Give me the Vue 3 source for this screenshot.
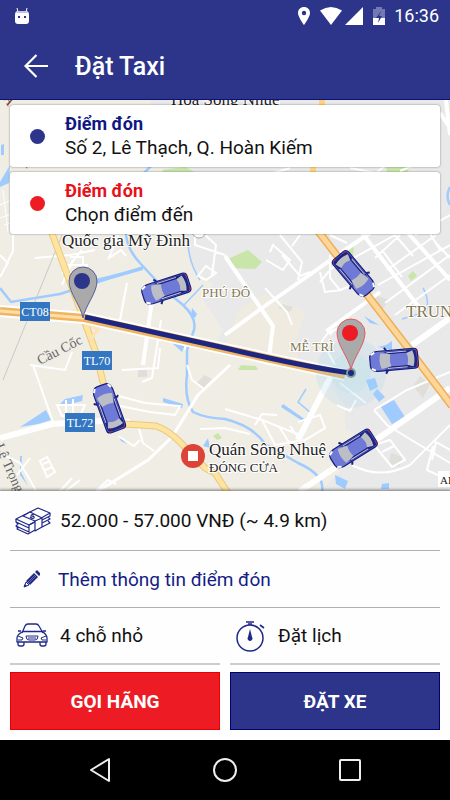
<template>
  <div class="screen">
    <header class="header">
      <div class="status-bar">
        <svg class="bot" viewBox="0 0 16 18">
          <path d="M3 1L4 5M13 1L12 5" stroke="#fff" stroke-width="1" />
          <path d="M1 8Q1 4 4 4H12Q15 4 15 8V14Q15 17 12 17H4Q1 17 1 14Z" fill="#fff" />
          <path d="M2 6Q3 4 5 4H11Q13 4 14 6Z" fill="#c3c5de" />
          <path d="M4 9h2v2H4zM10 9h2v2h-2z" fill="#2c3589" />
        </svg>
        <div class="status-icons">
          <svg width="14" height="20" viewBox="0 0 14 20">
            <path fill="#fff" fill-rule="evenodd" d="M7 1C3.500 1 1 3.500 1 7C1 11 7 19 7 19C7 19 13 11 13 7C13 3.500 10.500 1 7 1ZM7 4.800A2.200 2.200 0 1 1 7 9.200A2.200 2.200 0 1 1 7 4.800Z" />
          </svg>
          <svg class="wifi" width="24" height="20" viewBox="0 0 24 20">
            <path d="M1 4.500Q12 -2.500 23 4.500L12 19Z" fill="#fff" />
          </svg>
          <svg width="18" height="20" viewBox="0 0 18 20">
            <path d="M18 1V19H0Z" fill="#fff" />
          </svg>
          <svg class="battery" width="14" height="20" viewBox="0 0 14 20">
            <path d="M1 3H4V1H10V3H13V12H1Z" fill="#7379b3" />
            <path d="M1 12H13V19H1Z" fill="#fff" />
            <path d="M9 5L4 12H7L6 17L10 10H7Z" fill="#2c3589" />
          </svg>
          <span class="time">16:36</span>
        </div>
      </div>
      <div class="app-bar">
        <button class="back" aria-label="Quay lại">
          <svg width="24" height="26" viewBox="0 0 24 26">
            <path d="M12.500 2L1.500 13L12.500 24M2 13H24" fill="none" stroke="#fff" stroke-width="2.200" />
          </svg>
        </button>
        <h1 class="title">Đặt Taxi</h1>
      </div>
    </header>

    <main class="map-area">
      <svg class="map" viewBox="0 100 450 391" preserveAspectRatio="xMidYMin slice">
        <defs>
          <g id="taxi">
            <path d="M-7 -10L-9 -13M-7 10L-9 13" stroke="#1b2280" stroke-width="2" />
            <path d="M-24 -4Q-24 -9 -17 -10H20Q24 -10 24 -6V6Q24 10 20 10H-17Q-24 9 -24 4Z" fill="#6f7ad6" stroke="#171d7c" stroke-width="1.200" />
            <path d="M-10 -9H20Q23 -9 23 -6V6Q23 9 20 9H-10L-4 6H14V-6H-4Z" fill="#1d2583" />
            <path d="M-7 -8H13M-7 8H13" stroke="#c4c6dd" stroke-width="1" />
            <path d="M-13 -8L-3 -6Q-5 0 -3 6L-13 8Q-16 0 -13 -8Z" fill="#bcbec6" />
            <path d="M-3 -6H12Q14 0 12 6H-3Q-5 0 -3 -6Z" fill="#6f7ad6" />
            <path d="M13 -6L19 -8Q22 0 19 8L13 6Q15 0 13 -6Z" fill="#bcbec6" />
            <path d="M-23 -7L-19 -9M-23 7L-19 9" stroke="#fff" stroke-width="2" />
            <path d="M23 -8V-5M23 5V8" stroke="#b52350" stroke-width="1.500" />
          </g>
          <path id="pin" d="M0 0C-2 -12 -14 -25 -14 -37A14 14 0 0 1 14 -37C14 -25 2 -12 0 0Z" />
        </defs>

        <!-- land -->
        <rect x="0" y="100" width="450" height="391" fill="#f0ede5" />
        <path d="M150 100H450V491H322L336 475L372 445L345 428V405L318 372L215 345L223 330L203 300L213 285L190 265L184 232L165 170Z" fill="#e9e9e9" />
        <path d="M226 344L240 308L266 294L305 312L295 345L300 366Z" fill="#efebe1" />
        <g fill="#dfded8">
          <path d="M138 370h9v7h-9zM204 375l8 4-8 9-7-5zM377 296l12 4-9 13-9-9zM391 453l12 4-4 10-10-4zM283 304l10 3-3 5-12-4zM420 376l10 8-7 14-10-12z" />
        </g>
        <g fill="#c9e5aa">
          <path d="M230 258L248 250L262 262L255 269L231 268ZM345 250L354 246L353 257ZM408 276L413 271L417 276L411 281ZM386 167H410L407 173H387ZM162 170L185 167L195 172L165 174ZM241 365L256 366L258 370H238ZM213 436L218 433L222 438L217 440Z" />
        </g>

        <!-- water -->
        <g fill="#9fcbff">
          <path d="M20 427L46 410L51 420L38 424ZM58 406L65 399L83 395L82 401L66 405ZM163 398L183 404L182 408L163 402ZM118 435L127 444L121 441ZM20 456H22L21 472L28 486L20 475ZM283 404L306 420L304 422L281 407ZM366 380L375 378L378 387L370 391ZM373 394L377 389L385 397L379 402ZM381 407L394 400L405 417L392 424ZM335 475L348 481L345 489L336 484ZM382 484L389 483V489H381ZM203 446L208 438L210 448ZM1 145L4 144V155H1ZM0 182L10 165L9 183L0 187ZM364 316L371 320L379 325L370 323ZM171 342L185 345L182 352ZM192 308L197 314L195 318L191 315Z" />
          <path d="M386 345L392 341V350L378 347ZM95 279Q125 272 143 266V270Q120 277 96 282Z" />
        </g>
        <g fill="none" stroke="#9fcbff" stroke-width="2.500">
          <path d="M0 288L11 302L60 294L142 268M126 232Q126 248 140 263L165 290L183 305Q197 318 194 330L187 350V375Q184 398 193 412Q205 418 225 419Q253 426 265 444L298 463Q325 475 322 491" />
          <path d="M188 245Q190 265 200 280M184 305L203 285M423 288Q430 300 426 312L402 319M306 389L298 402L311 413L300 438" stroke-width="1.500" />
          <path d="M142 175L151 166M450 187Q445 196 450 205" />
        </g>

        <!-- minor streets -->
        <g fill="none" stroke="#fff" stroke-width="2">
          <path d="M0 255L8 263L0 277M13 235V251L6 265M35 258L70 255L95 250M62 285L72 262L82 250M118 235L109 258L121 250L126 256M63 265h24v8H63zM70 257h13v14M127 283L120 320" />
          <path d="M33 365L53 422M30 365L65 370L72 352M122 370L158 368L160 348M142 382L152 378L161 320M115 395L145 403L180 406L175 415L150 412L120 406M57 405H85L80 416H62ZM66 400V416M73 399V416M118 436L134 446L140 440M154 451L143 443L138 425" />
          <path d="M0 453L20 463L30 480L36 491M17 475L30 458M40 461L47 457L55 472L47 477ZM43 464L50 461M45 470L53 467M60 491L72 478M66 491L80 480M96 491L108 480L116 484" />
          <path d="M160 340H185V350M205 235L216 245L212 275M198 276L206 266L216 273L206 280ZM195 235V245L225 255M187 365L192 380L203 388" />
          <path d="M270 252L273 245L290 260L283 270L266 260M282 255L300 276L310 272M265 288L287 312L292 325M320 282L330 270L342 260M280 235L302 262L298 280" />
          <path d="M330 255V278L340 290L350 286M320 272L325 292L342 290M345 325L328 333L322 341L335 365" />
          <path d="M225 409L262 420L300 435M255 425L262 414L277 415M262 420L275 445L305 440L325 428L320 415L298 422M280 428L290 444M290 426L300 440M337 405L350 411L356 400M340 383L366 403" />
          <path d="M374 410L387 425L418 444L450 463M374 410L407 390L450 372M374 445L392 467L405 460L390 440ZM382 452L394 446M432 460L436 442L450 450M433 446L427 470L450 481M352 465Q380 480 410 465L450 425M200 429L225 428L250 434" />
          <path d="M375 258L400 235M387 270L436 235M378 285L450 245M385 303L450 255M395 315L450 275M350 260L395 235M395 235L413 256M382 250L402 277M423 250L440 270M435 242L450 258" />
          <path d="M400 171L417 164M350 168L376 173L386 165M270 174L290 168M415 235L450 215M425 225L440 250M300 235L292 246M330 235L347 243" />
          <path d="M3 190L8 232M0 205L12 200M0 218L11 214M4 225L14 222" stroke-width="1" />
        </g>
        <g fill="none" stroke="#fff" stroke-width="4">
          <path d="M225 256L260 307L273 326L268 365M225 335L262 308L345 250L370 233M362 233L425 315M408 233L450 280M332 334L328 330L380 292" />
          <path d="M152 300L143 365M446 100L450 135M440 113L450 128" />
        </g>
        <g fill="none" stroke="#fff" stroke-width="6">
          <path d="M0 438L52 424L100 421L130 422M300 491L376 440L450 388M332 374L298 440M412 345L450 318" />
          <path d="M98 491L148 460L172 437L198 395L230 365" stroke-width="3" />
        </g>
        <path d="M62 235L3 380" stroke="#cbc9c5" stroke-width="1" />

        <!-- main roads -->
        <g fill="none">
          <path d="M50 228L83 317L95 350L104 386M125 424L156 426Q168 430 180 442L205 468L215 473L228 493" stroke="#e8c980" stroke-width="7" />
          <path d="M50 228L83 317L95 350L104 386M125 424L156 426Q168 430 180 442L205 468L215 473L228 493" stroke="#ffe4a0" stroke-width="5" />
          <path d="M85 322L98 330L90 340" stroke="#ffe2b8" stroke-width="3" />
          <path d="M0 311L84 318L225 349L345 375" stroke="#fff" stroke-width="12" />
          <path d="M0 311L84 318L225 349L345 375" stroke="#f0b562" stroke-width="8" />
          <path d="M0 311L84 318" stroke="#ffdda5" stroke-width="3" />
          <path d="M318 231L368 296L408 348L452 406" stroke="#edb05a" stroke-width="8" />
          <path d="M318 231L368 296L408 348L452 406" stroke="#ffd699" stroke-width="5" />
          <path d="M322 96V106M313 166V174" stroke="#ffd27b" stroke-width="6" />
        </g>

        <circle cx="351" cy="373" r="35" fill="#9bd5ee" fill-opacity="0.200" />
        <circle cx="351" cy="373" r="20" fill="#9bd5ee" fill-opacity="0.150" />
        <path d="M85 317L225 348Q310 368 351 373" fill="none" stroke="#1d2782" stroke-width="5" />
        <circle cx="351" cy="373" r="5" fill="#7d9c93" />
        <circle cx="351" cy="373" r="3" fill="#1d2782" />

        <!-- labels -->
        <g class="place">
          <text x="171" y="105">Hòa Sông Nhuệ</text>
          <text x="62" y="246">Quốc gia Mỹ Đình</text>
          <text x="209" y="455">Quán Sông Nhuệ</text>
          <text x="209" y="472" class="status">ĐÓNG CỬA</text>
        </g>
        <g class="district">
          <text x="202" y="297">PHÚ ĐÔ</text>
          <text x="290" y="351">MỄ TRÌ</text>
          <text x="406" y="317" class="large">TRUN</text>
        </g>
        <g class="street">
          <text transform="translate(40 365) rotate(-27)">Cầu Cốc</text>
          <text transform="translate(-5 446) rotate(66)">Lê Trọng</text>
          <text transform="translate(3 98) rotate(60)" class="brown">A</text>
          <text transform="translate(22 160) rotate(60)" class="brown">A</text>
        </g>
        <circle cx="199" cy="231" r="7" fill="#fff" stroke="#aaa" stroke-width="1" />

        <g v-for="sign in signs" :key="sign.name" class="sign">
          <rect :x="sign.x" :y="sign.y" width="30" height="19" fill="#3377c2" />
          <text :x="sign.x + 15" :y="sign.y + 14">{{ sign.name }}</text>
        </g>

        <circle cx="193" cy="456" r="12" fill="#db4437" />
        <path d="M188 451h10v10h-10z" fill="#fff" />

        <use href="#pin" x="83" y="318" fill="#aaa" stroke="#555d9c" stroke-width="1" />
        <circle cx="82" cy="281" r="8" fill="#2c3589" />
        <use href="#pin" x="351" y="370" fill="#aaa" stroke="#e2595e" stroke-width="1" />
        <circle cx="350" cy="333" r="8" fill="#ed1c24" />

        <use
          v-for="(taxi, index) in taxis"
          :key="index"
          href="#taxi"
          :transform="`translate(${taxi.x} ${taxi.y}) rotate(${taxi.angle})`"
        />

        <path d="M438 471H450V487H438Z" fill="#fff" />
        <text x="440" y="484" class="tag">AE</text>
      </svg>

      <div class="points">
        <button v-for="point in points" :key="point.type" class="point" :class="point.type">
          <span class="dot"></span>
          <span class="point-info">
            <span class="point-label">{{ point.label }}</span>
            <span class="point-address">{{ point.address }}</span>
          </span>
        </button>
      </div>
    </main>

    <section class="sheet">
      <div class="row price">
        <svg class="icon" viewBox="0 0 36 28">
          <g fill="none" stroke="#1f2887" stroke-width="1.200" stroke-linejoin="round">
            <path d="M1 12L23 1L35 6L14 18Z" />
            <path d="M1 12V15L14 21V18M1 15L3 17L1 19L14 25V21M1 19L3 21L2 22L13 27L20 23" />
            <path d="M35 6V9L27 13M33 10L35 12L27 16M33 14L35 16L27 20" />
            <path d="M8 9L20 14V24L27 20V11L15 5Z" fill="#fff" />
            <path d="M20 14L27 11M14 18L20 15" />
            <path d="M19 8Q16 7 16 9Q20 9 19 11Q17 12 15 10" />
          </g>
        </svg>
        <span>52.000 - 57.000 VNĐ (~ 4.9 km)</span>
      </div>
      <button class="row note">
        <svg class="icon" viewBox="0 0 36 28">
          <path d="M9 22L11 17L14 20Z" fill="#fff" stroke="#1f2887" stroke-width="1" />
          <path d="M9 22L10 19L12 21ZM11 16L19 8L23 12L15 20ZM20 7L22 5L25 8V10L24 11Z" fill="#1f2887" />
          <path d="M13 17L20 10M14 18L21 11" stroke="#8f94c4" stroke-width="0.600" />
        </svg>
        <span>Thêm thông tin điểm đón</span>
      </button>
      <div class="columns">
        <button class="row option">
          <svg class="icon" viewBox="0 0 36 28">
            <g fill="none" stroke="#1f2887" stroke-width="1.300" stroke-linejoin="round">
              <path d="M7 11L10 4Q11 2 13 2H21Q23 2 24 4L28 11" />
              <path d="M6 9H3M28 9H31M7 9.500H28" />
              <path d="M7 10Q2 13 2 16V20H32V16Q32 13 28 10" />
              <path d="M3 14L8 16L7 18H3M31 14L26 16L27 18H31M11 14H23Q23 18 20 18H14Q11 18 11 14ZM13 16H21" stroke-width="1" />
              <path d="M3 20V22Q3 24 5 24H7Q9 24 9 22V20M25 20V22Q25 24 27 24H29Q31 24 31 22V20" />
            </g>
          </svg>
          <span>4 chỗ nhỏ</span>
        </button>
        <button class="row option schedule">
          <svg class="icon clock" viewBox="0 0 36 32">
            <circle cx="15" cy="18" r="13" fill="none" stroke="#1f2887" stroke-width="1.500" />
            <path d="M11 2H19M13 4H17M25 5L29 8" fill="none" stroke="#1f2887" stroke-width="1.600" />
            <path d="M15 9L17 17A2.500 2.500 0 1 1 13 17Z" fill="#1f2887" />
          </svg>
          <span>Đặt lịch</span>
        </button>
      </div>
      <div class="columns actions">
        <button class="action call">GỌI HÃNG</button>
        <button class="action book">ĐẶT XE</button>
      </div>
    </section>

    <nav class="nav-bar">
      <button aria-label="Trở về">
        <svg width="26" height="26" viewBox="0 0 26 26">
          <path d="M22 2V24L4 13Z" />
        </svg>
      </button>
      <button aria-label="Màn hình chính">
        <svg width="26" height="26" viewBox="0 0 26 26">
          <circle cx="13" cy="13" r="11" />
        </svg>
      </button>
      <button aria-label="Ứng dụng gần đây">
        <svg width="26" height="26" viewBox="0 0 26 26">
          <rect x="3" y="3" width="20" height="20" rx="1" />
        </svg>
      </button>
    </nav>
  </div>
</template>

<script setup>
const points = [
  { type: 'pickup', label: 'Điểm đón', address: 'Số 2, Lê Thạch, Q. Hoàn Kiếm' },
  { type: 'dropoff', label: 'Điểm đón', address: 'Chọn điểm đến' }
]

const signs = [
  { name: 'CT08', x: 20, y: 302 },
  { name: 'TL70', x: 82, y: 351 },
  { name: 'TL72', x: 65, y: 413 }
]

const taxis = [
  { x: 166, y: 289, angle: -18 },
  { x: 354, y: 274, angle: -130 },
  { x: 394, y: 360, angle: -5 },
  { x: 109, y: 408, angle: 70 },
  { x: 353, y: 449, angle: -32 }
]
</script>

<style>
body {
  margin: 0;
  background: #fff;
}
</style>

<style scoped>
.screen {
  display: flex;
  flex-direction: column;
  min-height: 100vh;
  font-family: Roboto, 'Noto Sans', sans-serif;
  font-size: 19px;
  color: #111;
}

button {
  margin: 0;
  padding: 0;
  border: none;
  background: none;
  font: inherit;
  color: inherit;
  text-align: left;
  cursor: pointer;
}

svg {
  display: block;
}

.header {
  background: #2c3589;
  border-bottom: 1px solid #0b1175;
  color: #fff;
}

.status-bar {
  display: flex;
  align-items: center;
  justify-content: space-between;
  height: 31px;
  padding: 0 11px 0 14px;
}

.bot {
  width: 16px;
  height: 18px;
}

.status-icons {
  display: flex;
  align-items: center;
}

.wifi {
  margin: 0 2px 0 8px;
}

.battery {
  margin: 0 8px 0 9px;
}

.time {
  font-size: 18px;
}

.app-bar {
  display: flex;
  align-items: center;
  gap: 27px;
  height: 68px;
  box-sizing: border-box;
  padding: 2px 24px 0;
}

.title {
  margin: 0;
  font-size: 25px;
  font-weight: 500;
}

.map-area {
  position: relative;
  flex: 1;
  overflow: hidden;
}

.map {
  position: absolute;
  inset: 0;
  width: 100%;
  height: 100%;
  font-family: 'Liberation Serif', serif;
}

.place text {
  fill: #222;
  font-size: 17px;
  stroke: #fff;
  stroke-width: 2px;
  paint-order: stroke;
}

.place .status {
  font-size: 13px;
}

.district text {
  fill: #85774f;
  font-size: 13px;
  stroke: #fff;
  stroke-width: 2px;
  paint-order: stroke;
}

.district .large {
  font-size: 17px;
}

.street text {
  fill: #666;
  font-size: 14px;
}

.street .brown {
  fill: #7a3b24;
}

.sign text {
  fill: #fff;
  font-size: 12px;
  text-anchor: middle;
}

.tag {
  font-size: 11px;
  fill: #222;
}

.points {
  position: relative;
  display: flex;
  flex-direction: column;
  gap: 5px;
  padding: 5px 10px 24px;
}

.point {
  display: flex;
  align-items: center;
  gap: 20px;
  padding: 7px 20px;
  background: #fff;
  border-radius: 3px;
  box-shadow: 0 0 2px rgba(0, 0, 0, 0.5);
}

.dot {
  width: 15px;
  height: 15px;
  border-radius: 50%;
}

.point-info {
  display: flex;
  flex-direction: column;
  line-height: 24px;
}

.point-label {
  font-size: 18px;
  font-weight: 700;
}

.pickup .dot {
  background: #2c3589;
}

.pickup .point-label {
  color: #0f1783;
}

.dropoff .dot {
  background: #ed1c24;
}

.dropoff .point-label {
  color: #e8111a;
}

.sheet {
  position: relative;
  padding: 0 10px 10px;
  background: #fefefe;
  box-shadow: 0 0 3px 1px rgba(0, 0, 0, 0.5);
}

.row {
  display: flex;
  align-items: center;
  gap: 9px;
  box-sizing: border-box;
  width: 100%;
  height: 57px;
  padding-left: 5px;
  border-bottom: 1px solid #b0b0b0;
}

.price {
  height: 60px;
}

.note {
  gap: 7px;
  color: #141c86;
}

.schedule {
  gap: 7px;
}

.icon {
  flex: none;
  width: 36px;
  height: 28px;
}

.clock {
  height: 32px;
}

.columns {
  display: grid;
  grid-template-columns: 1fr 1fr;
  gap: 10px;
}

.option {
  border-bottom: 2px solid #ccc;
}

.actions {
  margin-top: 7px;
}

.action {
  height: 58px;
  color: #fff;
  font-weight: 700;
  text-align: center;
}

.call {
  background: #ed1c24;
  border: 1px solid #e60000;
}

.book {
  background: #2c3589;
  border: 1px solid #00006e;
}

.nav-bar {
  position: relative;
  display: grid;
  grid-template-columns: repeat(3, 1fr);
  place-items: center;
  height: 60px;
  padding: 0 38px;
  background: #000;
}

.nav-bar path,
.nav-bar circle,
.nav-bar rect {
  fill: none;
  stroke: #eee;
  stroke-width: 2px;
  stroke-linejoin: round;
}
</style>
